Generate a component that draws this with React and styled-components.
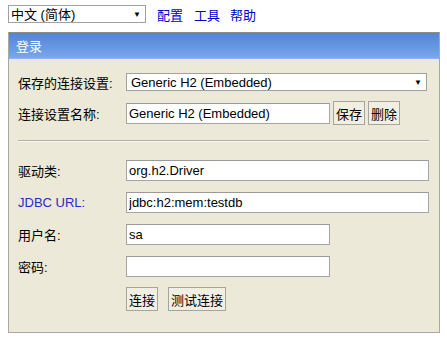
import React from "react";
import styled, { createGlobalStyle } from "styled-components";

const GlobalStyle = createGlobalStyle`
  body {
    margin: 0;
    background: #ffffff;
    font-family: "Liberation Sans", Arial, "Noto Sans CJK SC", sans-serif;
    font-size: 13px;
    color: #000;
  }
`;

const Page = styled.div`
  width: 447px;
  padding: 5px 0 0 8px;
  box-sizing: border-box;
`;

const TopBar = styled.div`
  display: flex;
  align-items: center;
  height: 18px;
`;

const SelectWrap = styled.div`
  position: relative;
  width: ${(p) => p.width}px;
  height: 18px;
`;

const Select = styled.select`
  appearance: none;
  -webkit-appearance: none;
  width: 100%;
  height: 100%;
  box-sizing: border-box;
  border: 1px solid #a0a0a0;
  border-radius: 0;
  background: #fff;
  font-family: "Liberation Sans", Arial, "Noto Sans CJK SC", sans-serif;
  font-size: 13px;
  color: #000;
  padding: 0 16px 0 ${(p) => p.pad || 3}px;
  margin: 0;
  outline: none;
`;

const Arrow = styled.span`
  position: absolute;
  right: 5px;
  top: 50%;
  transform: translateY(-50%);
  font-size: 8px;
  color: #000;
  pointer-events: none;
`;

const NavLink = styled.a`
  color: #0000c8;
  text-decoration: none;
  margin-left: ${(p) => p.gap}px;
  font-size: 13px;
`;

const Panel = styled.div`
  width: 432px;
  margin-top: 9px;
  box-sizing: border-box;
  border: 1px solid #a8a8a8;
  border-top-color: #8c8c8c;
`;

const Header = styled.div`
  height: 25px;
  display: flex;
  align-items: center;
  padding-left: 7px;
  color: #fff;
  font-size: 13px;
  background: linear-gradient(#5384d2, #78a7ee);
  border-bottom: 1px solid #8fb4ee;
`;

const Body = styled.div`
  background: #ece9d8;
  padding: 7px 10px 16px 9px;
`;

const Row = styled.div`
  display: flex;
  align-items: center;
  height: ${(p) => p.h}px;
`;

const Label = styled.div`
  width: 108px;
  flex-shrink: 0;
  color: ${(p) => (p.link ? "#2a2acc" : "#000")};
`;

const Input = styled.input`
  width: ${(p) => p.width}px;
  height: ${(p) => p.height || 21}px;
  box-sizing: border-box;
  border: 1px solid #a5a5a5;
  border-top-color: #9a9a9a;
  background: #fff;
  font-family: "Liberation Sans", Arial, "Noto Sans CJK SC", sans-serif;
  font-size: 13px;
  color: #000;
  padding: 0 2px;
  margin: 0;
  outline: none;
`;

const Button = styled.button`
  height: 24px;
  box-sizing: border-box;
  padding: 0 2px;
  margin: 0 0 0 ${(p) => p.gap || 0}px;
  border: 1px solid #a8a598;
  border-radius: 0;
  background: #f1efe4;
  font-family: "Liberation Sans", Arial, "Noto Sans CJK SC", sans-serif;
  font-size: 13px;
  color: #000;
`;

const Separator = styled.div`
  height: 0;
  border-top: 1px solid #b2b0a6;
  border-bottom: 1px solid #f8f7f2;
  margin: 12px 0 12px 0;
`;

export default function App() {
  return (
    <>
      <GlobalStyle />
      <Page>
        <TopBar>
          <SelectWrap width={138}>
            <Select pad={2} defaultValue="zh_CN">
              <option value="zh_CN">中文 (简体)</option>
            </Select>
            <Arrow>▼</Arrow>
          </SelectWrap>
          <NavLink href="#" gap={11}>配置</NavLink>
          <NavLink href="#" gap={11}>工具</NavLink>
          <NavLink href="#" gap={10}>帮助</NavLink>
        </TopBar>

        <Panel>
          <Header>登录</Header>
          <Body>
            <Row h={32}>
              <Label>保存的连接设置:</Label>
              <SelectWrap width={301}>
                <Select pad={4} defaultValue="h2">
                  <option value="h2">Generic H2 (Embedded)</option>
                </Select>
                <Arrow>▼</Arrow>
              </SelectWrap>
            </Row>
            <Row h={30}>
              <Label>连接设置名称:</Label>
              <Input width={204} height={21} defaultValue="Generic H2 (Embedded)" />
              <Button gap={3}>保存</Button>
              <Button gap={3}>删除</Button>
            </Row>
            <Separator />
            <Row h={32}>
              <Label>驱动类:</Label>
              <Input width={304} defaultValue="org.h2.Driver" />
            </Row>
            <Row h={32}>
              <Label link>JDBC URL:</Label>
              <Input width={304} defaultValue="jdbc:h2:mem:testdb" />
            </Row>
            <Row h={32}>
              <Label>用户名:</Label>
              <Input width={204} defaultValue="sa" />
            </Row>
            <Row h={32}>
              <Label>密码:</Label>
              <Input width={204} type="password" defaultValue="" />
            </Row>
            <Row h={34}>
              <Label />
              <Button>连接</Button>
              <Button gap={10}>测试连接</Button>
            </Row>
          </Body>
        </Panel>
      </Page>
    </>
  );
}
